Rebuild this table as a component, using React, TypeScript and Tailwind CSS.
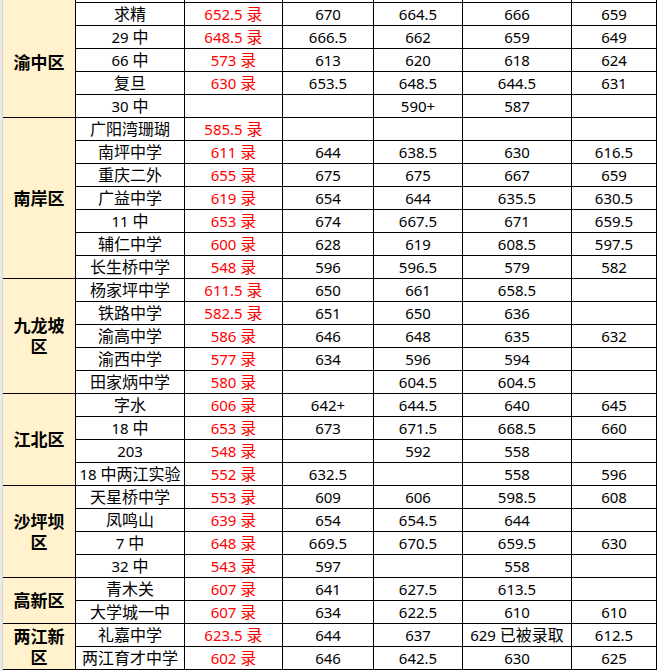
type Row = [string, string, string, string, string, string];

interface District {
  name: string[];
  rows: Row[];
  shift?: string;
}

const districts: District[] = [
  {
    name: ['渝中区'],
    shift: 'pt-[8px]',
    rows: [
      ['求精', '652.5 录', '670', '664.5', '666', '659'],
      ['29 中', '648.5 录', '666.5', '662', '659', '649'],
      ['66 中', '573 录', '613', '620', '618', '624'],
      ['复旦', '630 录', '653.5', '648.5', '644.5', '631'],
      ['30 中', '', '', '590+', '587', ''],
    ],
  },
  {
    name: ['南岸区'],
    rows: [
      ['广阳湾珊瑚', '585.5 录', '', '', '', ''],
      ['南坪中学', '611 录', '644', '638.5', '630', '616.5'],
      ['重庆二外', '655 录', '675', '675', '667', '659'],
      ['广益中学', '619 录', '654', '644', '635.5', '630.5'],
      ['11 中', '653 录', '674', '667.5', '671', '659.5'],
      ['辅仁中学', '600 录', '628', '619', '608.5', '597.5'],
      ['长生桥中学', '548 录', '596', '596.5', '579', '582'],
    ],
  },
  {
    name: ['九龙坡', '区'],
    rows: [
      ['杨家坪中学', '611.5 录', '650', '661', '658.5', ''],
      ['铁路中学', '582.5 录', '651', '650', '636', ''],
      ['渝高中学', '586 录', '646', '648', '635', '632'],
      ['渝西中学', '577 录', '634', '596', '594', ''],
      ['田家炳中学', '580 录', '', '604.5', '604.5', ''],
    ],
  },
  {
    name: ['江北区'],
    rows: [
      ['字水', '606 录', '642+', '644.5', '640', '645'],
      ['18 中', '653 录', '673', '671.5', '668.5', '660'],
      ['203', '548 录', '', '592', '558', ''],
      ['18 中两江实验', '552 录', '632.5', '', '558', '596'],
    ],
  },
  {
    name: ['沙坪坝', '区'],
    rows: [
      ['天星桥中学', '553 录', '609', '606', '598.5', '608'],
      ['凤鸣山', '639 录', '654', '654.5', '644', ''],
      ['7 中', '648 录', '669.5', '670.5', '659.5', '630'],
      ['32 中', '543 录', '597', '', '558', ''],
    ],
  },
  {
    name: ['高新区'],
    rows: [
      ['青木关', '607 录', '641', '627.5', '613.5', ''],
      ['大学城一中', '607 录', '634', '622.5', '610', '610'],
    ],
  },
  {
    name: ['两江新', '区'],
    rows: [
      ['礼嘉中学', '623.5 录', '644', '637', '629 已被录取', '612.5'],
      ['两江育才中学', '602 录', '646', '642.5', '630', '625'],
    ],
  },
];

const spanClass: Record<number, string> = {
  2: 'row-span-2',
  4: 'row-span-4',
  5: 'row-span-5',
  6: 'row-span-6',
  7: 'row-span-7',
};

// Han characters render a touch larger than the digits in the sheet
function Mixed({ text }: { text: string }) {
  const parts = text.split(/([\u4e00-\u9fff]+)/).filter(Boolean);
  return (
    <>
      {parts.map((p, i) =>
        /[\u4e00-\u9fff]/.test(p) ? (
          <span key={i} className="text-[16px]">
            {p}
          </span>
        ) : (
          <span key={i}>{p}</span>
        ),
      )}
    </>
  );
}

function Cell({ text, red }: { text: string; red?: boolean }) {
  return (
    <div
      className={`bg-white flex items-center justify-center whitespace-pre leading-none ${
        red ? 'text-[#ff0000]' : 'text-black'
      }`}
    >
      <Mixed text={text} />
    </div>
  );
}

export default function App() {
  return (
    <div
      className="w-[659px] h-[671px] overflow-hidden bg-white flex text-[15px]"
      style={{ fontFamily: '"Noto Sans", "Noto Sans CJK SC", sans-serif' }}
    >
      {/* row header strip */}
      <div className="w-[3px] shrink-0 bg-[#e9e9e9] border-r border-[#d4d4d4]" />

      <div className="shrink-0 self-start bg-black border-r border-b border-black grid grid-cols-[72px_108px_97px_90px_88px_108px_84px] grid-rows-[2px_repeat(29,22px)] gap-px">
        {districts.map((d, di) => {
          const span = d.rows.length + (di === 0 ? 1 : 0);
          return [
            <div
              key={`d${di}`}
              className={`${spanClass[span]} ${d.shift ?? ''} bg-[#fff2cc] flex flex-col items-center justify-center font-bold text-[17px] leading-[21px] text-black`}
            >
              {d.name.map((line) => (
                <span key={line}>{line}</span>
              ))}
            </div>,
            ...(di === 0
              ? Array.from({ length: 6 }, (_, i) => <div key={`top${i}`} className="bg-white" />)
              : []),
            ...d.rows.flatMap((r, ri) =>
              r.map((v, ci) => <Cell key={`${di}-${ri}-${ci}`} text={v} red={ci === 1} />),
            ),
          ];
        })}
      </div>

      <div className="flex-1 bg-white" />
    </div>
  );
}
